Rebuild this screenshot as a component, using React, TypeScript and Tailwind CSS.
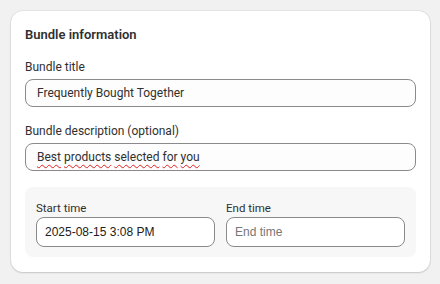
const sans = 'font-[Roboto,"Noto_Sans",sans-serif]'

function Label({ children, small }: { children: React.ReactNode; small?: boolean }) {
  return (
    <div className={`${small ? 'text-[11.5px]' : 'text-[12px]'} leading-4 text-[#303030]`}>{children}</div>
  )
}

export default function App() {
  const desc = ['Best', 'products', 'selected', 'for', 'you']

  return (
    <div className={`h-[284px] w-[440px] bg-[#f1f1f1] pl-[11px] pt-[11px] ${sans}`}>
      <div className="w-[419px] rounded-[12px] bg-white px-[14px] pb-[15px] pt-[14px] shadow-[0_0_0_1px_rgba(0,0,0,0.05),0_1px_2px_rgba(0,0,0,0.14)]">
        <h2 className="text-[13px] font-semibold leading-5 text-[#303030]">Bundle information</h2>

        <div className="mt-[14px] flex flex-col gap-4">
          {/* Title */}
          <div className="flex flex-col gap-1">
            <Label>Bundle title</Label>
            <input
              readOnly
              value="Frequently Bought Together"
              className="h-[28px] w-full rounded-[8px] border border-[#8a8a8a] bg-[#fdfdfd] px-[11px] text-[12px] text-[#303030] outline-none"
            />
          </div>

          {/* Description */}
          <div className="flex flex-col gap-1">
            <Label>Bundle description (optional)</Label>
            <div className="flex h-[28px] w-full items-center gap-[3px] rounded-[8px] border border-[#8a8a8a] bg-[#fdfdfd] px-[11px] text-[12px] text-[#303030]">
              {desc.map((w) => (
                <span
                  key={w}
                  className="underline decoration-[#e02020] decoration-wavy decoration-1 underline-offset-[3px]"
                >
                  {w}
                </span>
              ))}
            </div>
          </div>

          {/* Schedule */}
          <div className="grid grid-cols-2 gap-[11px] rounded-[8px] bg-[#f7f7f7] pb-[10px] pl-[11px] pr-[11px] pt-[13px]">
            <div className="flex flex-col gap-px">
              <Label small>Start time</Label>
              <input
                readOnly
                value="2025-08-15 3:08 PM"
                className="h-[30px] w-full rounded-[8px] border border-[#8a8a8a] bg-white px-2 font-['Liberation_Sans',Arial,sans-serif] text-[12px] text-[#202020] outline-none"
              />
            </div>
            <div className="flex flex-col gap-px">
              <Label small>End time</Label>
              <input
                readOnly
                placeholder="End time"
                className="h-[30px] w-full rounded-[8px] border border-[#8a8a8a] bg-white px-2 font-['Liberation_Sans',Arial,sans-serif] text-[12px] text-[#202020] outline-none placeholder:text-[#767676]"
              />
            </div>
          </div>
        </div>
      </div>
    </div>
  )
}
